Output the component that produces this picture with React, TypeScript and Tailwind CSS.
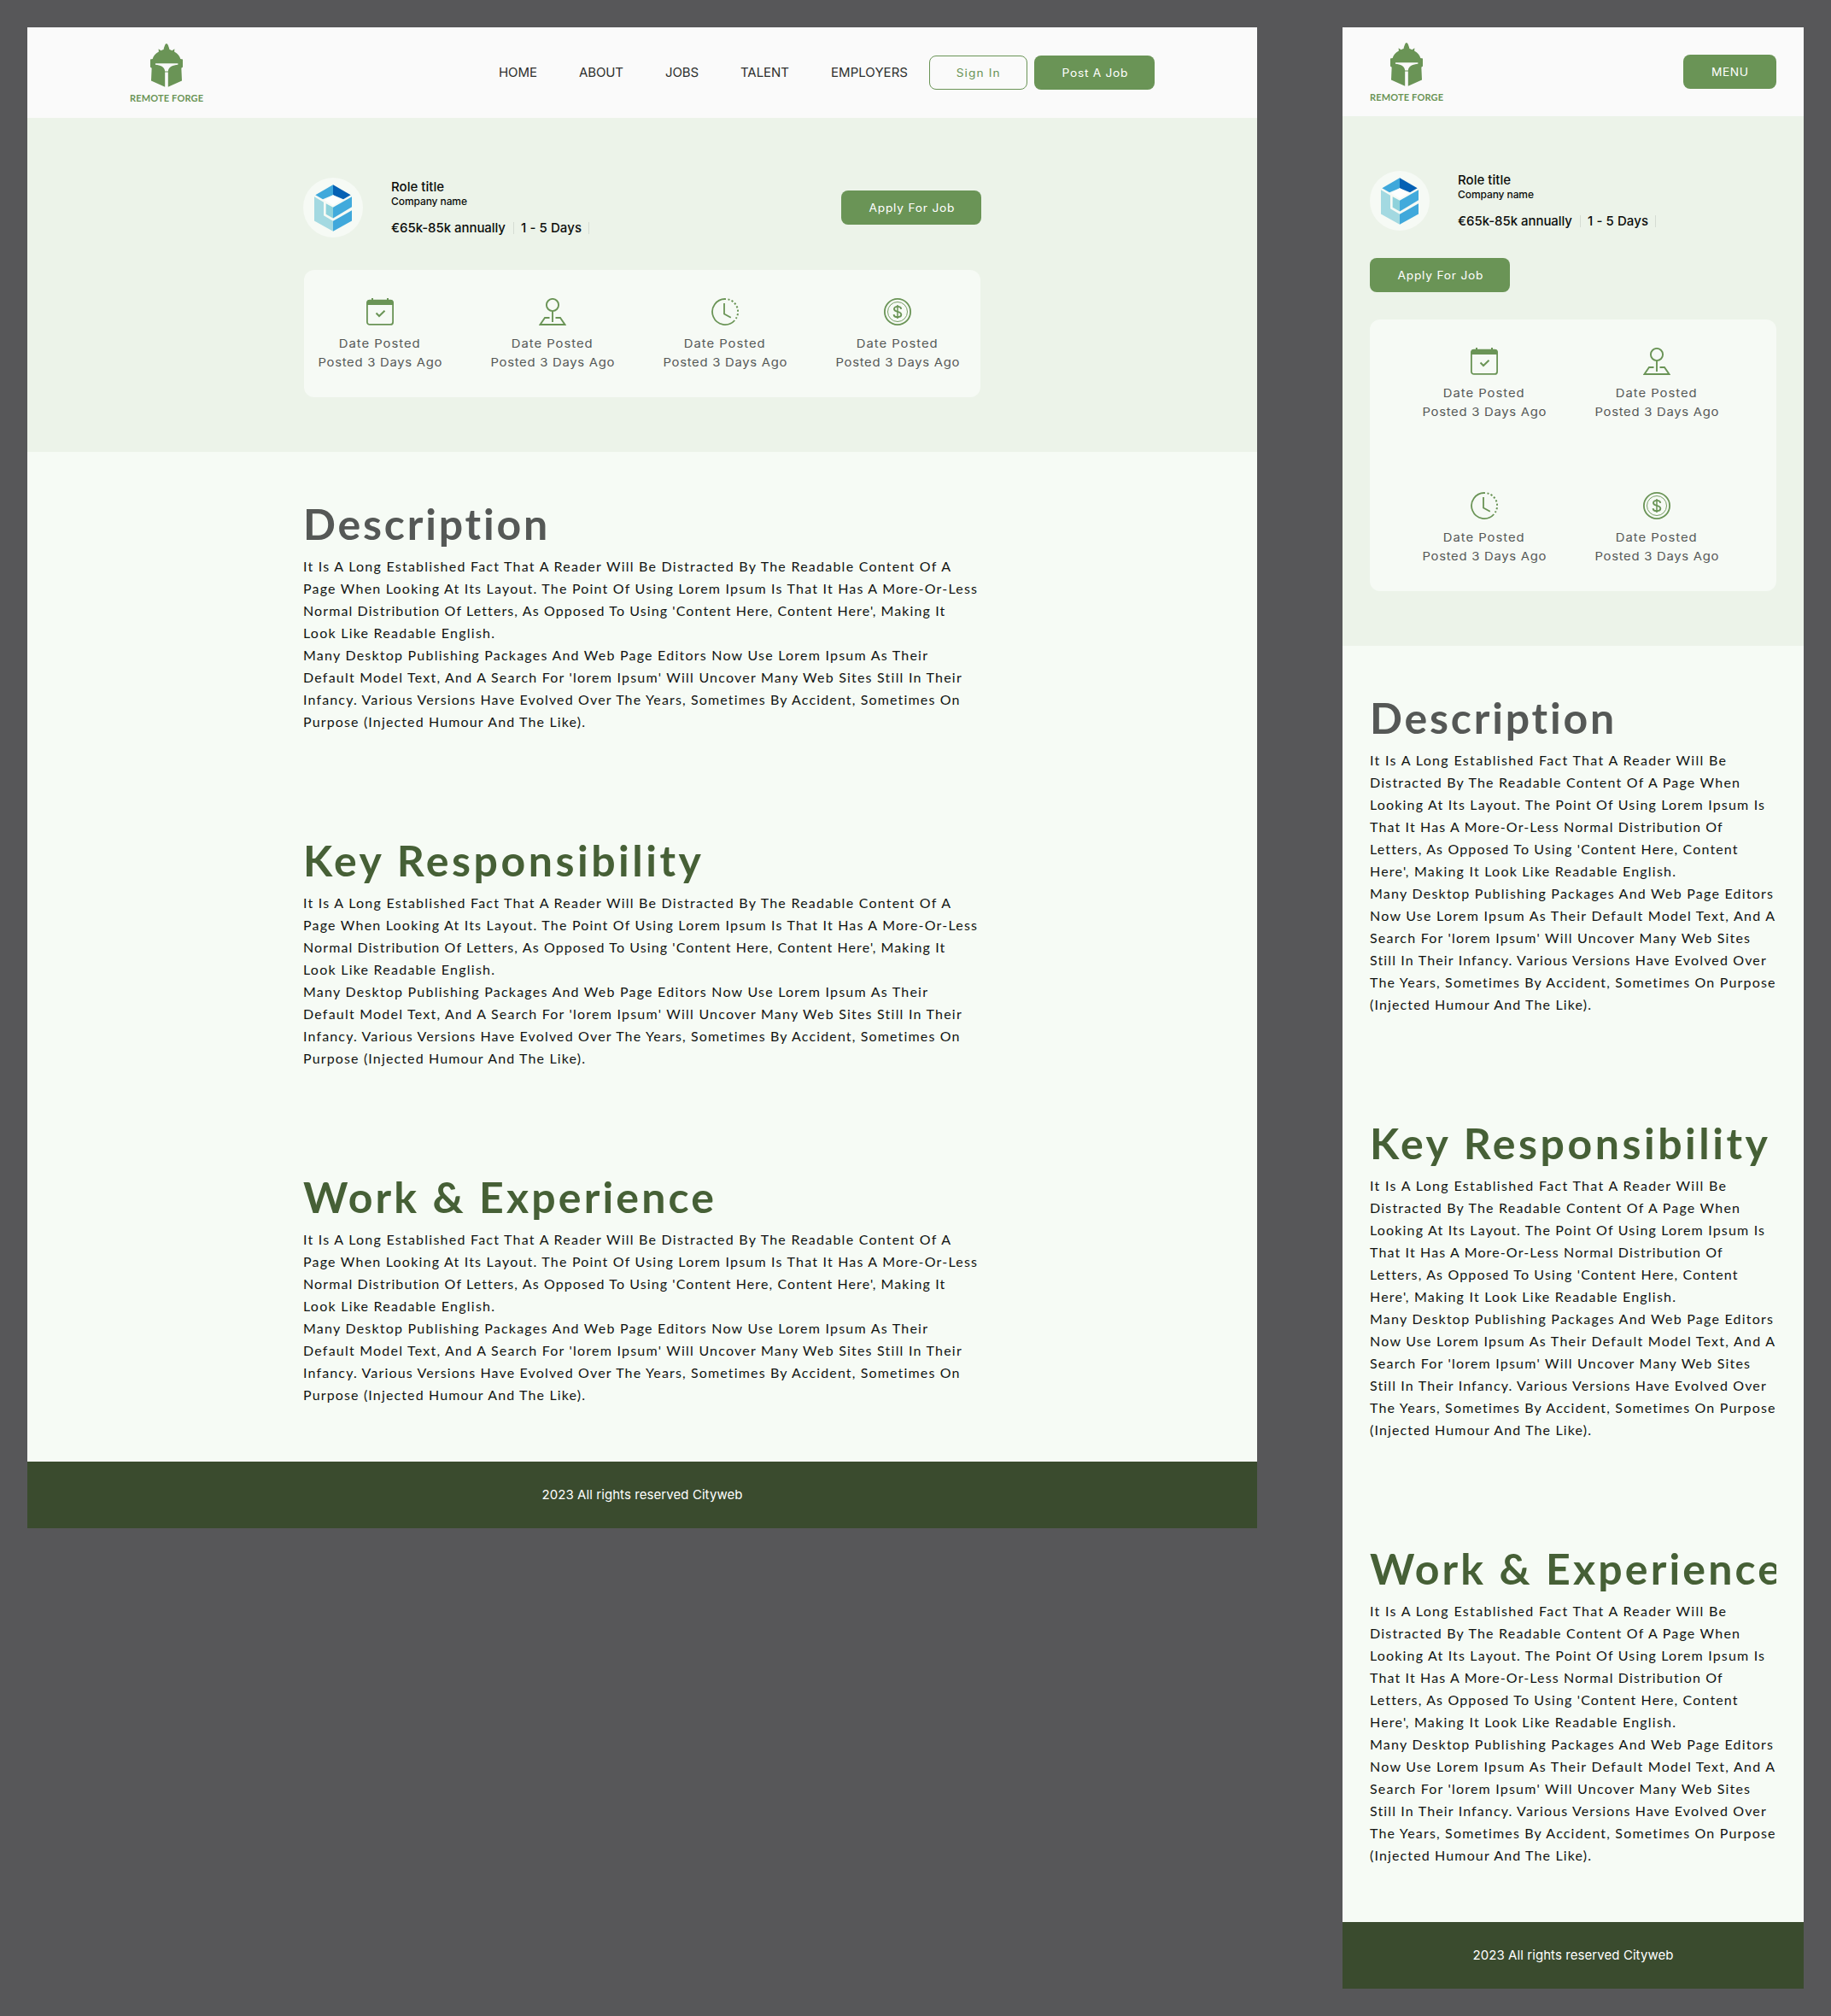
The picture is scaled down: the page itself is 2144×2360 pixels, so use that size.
import { useLayoutEffect, useRef, useState } from "react";
import type { ReactNode } from "react";

const STRETCH = 1.1;

/**
 * One line of text whose tracking is set so that it spans the given width.
 * With `wide`, the letters are also extended horizontally by STRETCH.
 */
function Line({ text, width, wide = false, className = "" }: { text: string; width: number; wide?: boolean; className?: string }) {
  const ref = useRef<HTMLSpanElement>(null);
  const [tracking, setTracking] = useState(0);
  useLayoutEffect(() => {
    const el = ref.current;
    if (!el) return;
    const factor = wide ? STRETCH : 1;
    el.style.letterSpacing = "0px";
    const natural = el.getBoundingClientRect().width / factor;
    const next = (width / factor - natural) / (text.length - 1);
    el.style.letterSpacing = `${next}px`;
    setTracking(next);
  }, [text, width, wide]);
  return (
    <span className={`block whitespace-pre ${wide ? "origin-center scale-x-[1.1]" : ""} ${className}`}>
      <span ref={ref} className="inline-block" style={{ letterSpacing: tracking, marginRight: -tracking }}>
        {text}
      </span>
    </span>
  );
}

const LATO = "font-['Lato','Open_Sans',sans-serif]";

function Logo() {
  return (
    <div className="flex w-[86px] flex-col items-center pt-1 text-[#6a9456]">
      <svg viewBox="0 0 115 154" className="h-[51px] w-[38px]" preserveAspectRatio="none" fill="currentColor" fillRule="evenodd">
        <path d="M57 0C53 0 50 10 47 21Q42 22 38 25L29 19L30 29C18 36 11 44 8 54L0 56V83L5 87L3 131L52 153V101H63V153L112 131L110 87L115 83V56L107 54C104 44 97 36 85 29L86 19L77 25Q73 22 68 21C65 10 62 0 57 0ZM18 70H98V75C80 77 65 82 63 98H52C50 82 36 77 18 75Z" />
      </svg>
      <Line text="REMOTE FORGE" width={86} className={`${LATO} mt-[5px] text-[11px] leading-[16px] font-bold`} />
    </div>
  );
}

function Button({ children, className = "" }: { children: ReactNode; className?: string }) {
  return (
    <button
      className={`flex h-10 shrink-0 items-center justify-center rounded-lg pt-0.5 font-['Inter',sans-serif] text-[12.500px] ${className}`}
    >
      {children}
    </button>
  );
}

function CompanyMark() {
  return (
    <div className="flex size-[70px] shrink-0 items-center justify-center rounded-full bg-[#f6faf5]">
      <svg viewBox="0 0 132 164" className="h-[55px] w-[44px]">
        <path fill="#3fa8db" d="M66 0L4 36L30 51L66 36Z" />
        <path fill="#0460b4" d="M66 0L128 36L102 51L66 36Z" />
        <path fill="#fdfefe" d="M66 36L96 54L66 73L36 54Z" />
        <path fill="#a3d9e1" d="M0 42L33 62V108L66 128V164L0 127Z" />
        <path fill="#8fd2db" d="M41 66L66 80V118L41 104Z" />
        <path fill="#41aadc" d="M66 80L132 42V78L66 118Z" />
        <path fill="#3fa8db" d="M132 90L66 128V164L132 127Z" />
      </svg>
    </div>
  );
}

function RoleSummary() {
  return (
    <div className="flex items-center gap-[33px]">
      <CompanyMark />
      <div className="font-['Inter',sans-serif] font-medium text-[#0b0d0b]">
        <Line text="Role title" width={62} className="text-[15px] leading-5" />
        <Line text="Company name" width={89} className="-mt-px text-xs leading-[15px]" />
        <div className="mt-[14px] flex items-center text-[15px] leading-5">
          <Line text="€65k-85k annually" width={134} />
          <span className="ml-[9px] h-[14px] w-px bg-[#d5dcd3]" />
          <Line text="1 - 5 Days" width={71} className="ml-2" />
          <span className="ml-2 h-[14px] w-px bg-[#d5dcd3]" />
        </div>
      </div>
    </div>
  );
}

function CalendarIcon() {
  return (
    <svg viewBox="0 0 32 32" className="size-8" fill="none" stroke="currentColor">
      <rect x="0.9" y="2.6" width="30.2" height="28.3" rx="3" strokeWidth="1.8" />
      <path d="M0.5 8V5Q0.5 2 4 2H28Q31.500 2 31.500 5V8Z" fill="currentColor" stroke="none" />
      <path d="M7 0V3M25 0V3" strokeWidth="2" />
      <path d="M11.500 17.500L15 21L21.500 14.800" strokeWidth="2" />
    </svg>
  );
}

function PinIcon() {
  return (
    <svg viewBox="0 0 32 32" className="size-8" fill="none" stroke="currentColor" strokeWidth="1.9">
      <circle cx="16" cy="8" r="7.100" />
      <path d="M16 15V28" />
      <path d="M12.500 23H7L1.500 31H30.500L25 23H19.500" />
    </svg>
  );
}

function ClockIcon() {
  return (
    <svg viewBox="0 0 32 32" className="size-8" fill="none" stroke="currentColor" strokeWidth="1.8">
      <path d="M17 1.030A15 15 0 1 0 27.300 26" />
      <path d="M19.500 1.400A15 15 0 0 1 28.800 24" strokeWidth="2" strokeDasharray="2.100 2.300" />
      <path d="M15 6V18.500L22.800 22.700" />
    </svg>
  );
}

function CoinIcon() {
  return (
    <svg viewBox="0 0 32 32" className="size-8" fill="none" stroke="currentColor">
      <circle cx="16" cy="16" r="15.100" strokeWidth="1.800" />
      <circle cx="16" cy="16" r="11.500" strokeWidth="0.900" />
      <path d="M20.200 12.800C20 10.700 18.300 9.900 16 9.900C13.500 9.900 12 11 12 12.800C12 14.700 13.600 15.300 16 15.900C18.500 16.500 20.300 17.200 20.300 19.300C20.300 21.200 18.500 22.200 16 22.200C13.400 22.200 11.700 21.200 11.600 19.100" strokeWidth="1.900" />
      <path d="M16 8V24" strokeWidth="1.500" />
    </svg>
  );
}

const FACTS = [CalendarIcon, PinIcon, ClockIcon, CoinIcon];

function Facts({ className }: { className: string }) {
  return (
    <div className={`grid rounded-xl bg-[#f6faf5] pt-[33px] ${className}`}>
      {FACTS.map((Icon, i) => (
        <div key={i} className="flex h-[106px] flex-col items-center text-[#6a9456]">
          <Icon />
          <div className="mt-[10px] flex flex-col items-center font-['Inter',sans-serif] text-[13.500px] leading-[22px] text-[#555855]">
            <Line wide text="Date Posted" width={95} />
            <Line wide text="Posted 3 Days Ago" width={145} />
          </div>
        </div>
      ))}
    </div>
  );
}

type Copy = [string, number][];

const WIDE_COPY: Copy = [
  ["It Is A Long Established Fact That A Reader Will Be Distracted By The Readable Content Of A", 758],
  ["Page When Looking At Its Layout. The Point Of Using Lorem Ipsum Is That It Has A More-Or-Less", 789],
  ["Normal Distribution Of Letters, As Opposed To Using 'Content Here, Content Here', Making It", 751],
  ["Look Like Readable English.", 224],
  ["Many Desktop Publishing Packages And Web Page Editors Now Use Lorem Ipsum As Their", 731],
  ["Default Model Text, And A Search For 'lorem Ipsum' Will Uncover Many Web Sites Still In Their", 771],
  ["Infancy. Various Versions Have Evolved Over The Years, Sometimes By Accident, Sometimes On", 769],
  ["Purpose (Injected Humour And The Like).", 330],
];

const NARROW_COPY: Copy = [
  ["It Is A Long Established Fact That A Reader Will Be", 417],
  ["Distracted By The Readable Content Of A Page When", 433],
  ["Looking At Its Layout. The Point Of Using Lorem Ipsum Is", 462],
  ["That It Has A More-Or-Less Normal Distribution Of", 413],
  ["Letters, As Opposed To Using 'Content Here, Content", 430],
  ["Here', Making It Look Like Readable English.", 358],
  ["Many Desktop Publishing Packages And Web Page Editors", 472],
  ["Now Use Lorem Ipsum As Their Default Model Text, And A", 474],
  ["Search For 'lorem Ipsum' Will Uncover Many Web Sites", 445],
  ["Still In Their Infancy. Various Versions Have Evolved Over", 464],
  ["The Years, Sometimes By Accident, Sometimes On Purpose", 475],
  ["(Injected Humour And The Like).", 259],
];

const SECTIONS = [
  { title: "Description", width: 287, color: "text-[#555856]" },
  { title: "Key Responsibility", width: 466, color: "text-[#466036]" },
  { title: "Work & Experience", width: 481, color: "text-[#466036]" },
];

function Sections({ copy, className }: { copy: Copy; className: string }) {
  return (
    <main className={`flex flex-col gap-[121px] bg-[#f6fbf5] pt-14 ${LATO} ${className}`}>
      {SECTIONS.map((s) => (
        <section key={s.title}>
          <h2 className={`overflow-x-clip pt-[3px] pb-[2px] ${s.color}`}>
            <Line text={s.title} width={s.width} className="h-[60px] text-[50px] leading-[50px] font-bold" />
          </h2>
          <div className="text-base leading-[26px] text-[#111411]">
            {copy.map(([text, width]) => (
              <Line key={text} text={text} width={width} />
            ))}
          </div>
        </section>
      ))}
    </main>
  );
}

function Footer() {
  return (
    <footer className="flex h-[78px] items-center justify-center bg-[#3a4b2e] font-['Inter',sans-serif] text-[15px] text-white">
      <Line text="2023 All rights reserved Cityweb" width={235} />
    </footer>
  );
}

const NAV: [string, number][] = [
  ["HOME", 45],
  ["ABOUT", 52],
  ["JOBS", 39],
  ["TALENT", 57],
  ["EMPLOYERS", 90],
];

function Desktop() {
  return (
    <div className="w-[1440px] shrink-0">
      <header className="flex h-[106px] items-center justify-between bg-[#fafafa] px-[120px]">
        <Logo />
        <div className="flex items-center">
          <nav className="flex gap-[49px] font-['Inter',sans-serif] text-[15px] text-[#2e302e]">
            {NAV.map(([label, width]) => (
              <Line key={label} text={label} width={width} />
            ))}
          </nav>
          <Button className="ml-[25px] w-[115px] border border-[#6a9456] text-[#6a9456]">
            <Line wide text="Sign In" width={51} />
          </Button>
          <Button className="ml-2 w-[141px] bg-[#6a9456] text-white">
            <Line wide text="Post A Job" width={77} />
          </Button>
        </div>
      </header>
      <div className="h-[391px] bg-[#ecf3e9] px-[323px] pt-[70px]">
        <div className="flex items-center justify-between">
          <RoleSummary />
          <Button className="w-[164px] bg-[#6a9456] text-white">
            <Line wide text="Apply For Job" width={100} />
          </Button>
        </div>
        <Facts className="mt-[38px] ml-px h-[149px] w-[792px] grid-cols-[repeat(4,145px)] gap-x-[57px] pl-4" />
      </div>
      <Sections copy={WIDE_COPY} className="px-[323px] pb-[65px]" />
      <Footer />
    </div>
  );
}

function Mobile() {
  return (
    <div className="w-[540px] shrink-0">
      <header className="flex h-[104px] items-center justify-between bg-[#fafafa] px-8">
        <Logo />
        <Button className="w-[109px] bg-[#6a9456] text-white">
          <Line wide text="MENU" width={43} />
        </Button>
      </header>
      <div className="h-[620px] bg-[#ecf3e9] px-8 pt-16">
        <RoleSummary />
        <Button className="mt-8 w-[164px] bg-[#6a9456] text-white">
          <Line wide text="Apply For Job" width={100} />
        </Button>
        <Facts className="mt-8 h-[318px] grid-cols-[repeat(2,145px)] content-start gap-x-[57px] gap-y-[63px] pl-[61px]" />
      </div>
      <Sections copy={NARROW_COPY} className="px-8 pb-[65px]" />
      <Footer />
    </div>
  );
}

export default function App() {
  return (
    <div className="flex h-[2360px] w-[2144px] items-start gap-[100px] overflow-hidden bg-[#575759] p-8">
      <Desktop />
      <Mobile />
    </div>
  );
}
